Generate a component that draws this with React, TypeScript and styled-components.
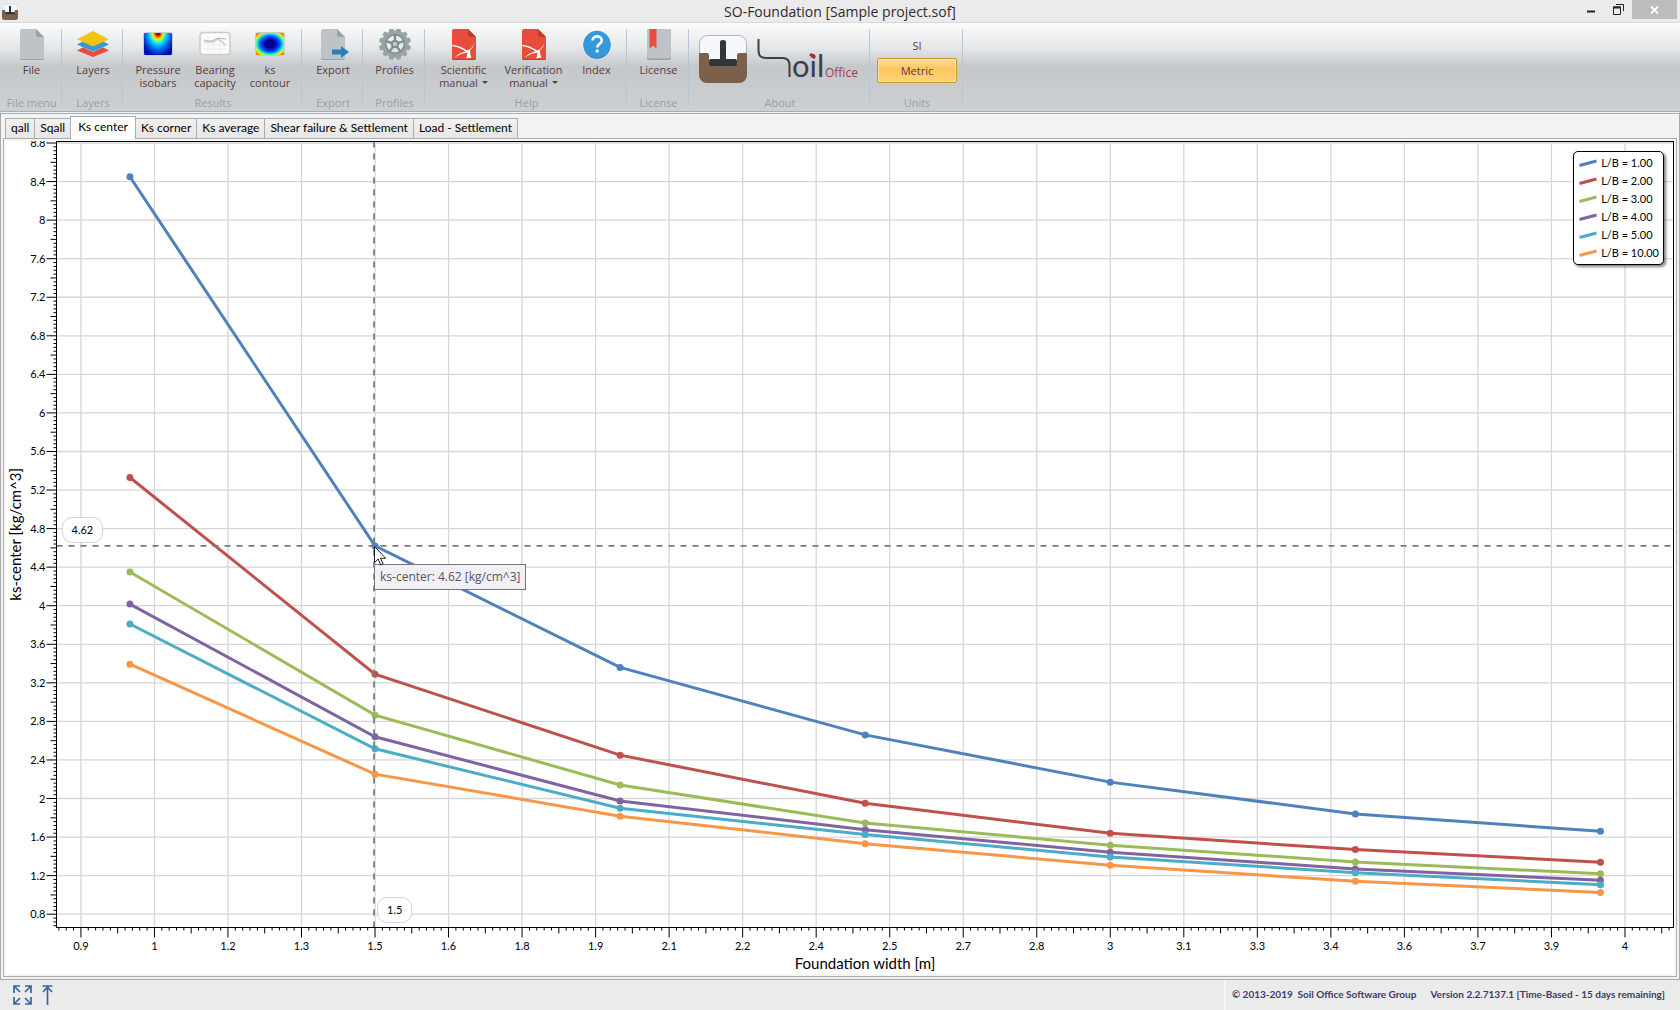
import React, { useLayoutEffect, useRef, useState } from "react";
import styled, { createGlobalStyle } from "styled-components";

const uiFont = `"Open Sans", "Noto Sans", sans-serif`;
const chartFont = `Lato, "Open Sans", sans-serif`;

const GlobalStyle = createGlobalStyle`
  *, *::before, *::after { box-sizing: border-box; }
  html, body, #root { height: 100%; margin: 0; }
  body { background: #ebebeb; font-family: ${uiFont}; overflow: hidden; }
  button { font: inherit; border: 0; margin: 0; padding: 0; background: none; color: inherit; }
`;

const Window = styled.div`
  display: flex;
  flex-direction: column;
  height: 100vh;
`;

/* ---------- title bar ---------- */

const TitleBar = styled.header`
  display: grid;
  grid-template-columns: 1fr auto 1fr;
  height: 23px;
  background: #ebebeb;
  border-bottom: 1px solid #d7d9db;
`;

const AppIcon = styled.div`
  padding: 3px 2px;
`;

const Title = styled.h1`
  margin: 0;
  font-size: 14px;
  line-height: 23px;
  font-weight: 400;
  color: #2b2b2b;
`;

const WindowControls = styled.div`
  display: flex;
  justify-content: flex-end;
  padding-right: 3px;
`;

const WindowButton = styled.button<{ $close?: boolean }>`
  display: flex;
  align-items: center;
  justify-content: center;
  width: ${(p) => (p.$close ? 45 : 27)}px;
  height: 19px;
  background: ${(p) => (p.$close ? "#bcbcbc" : "transparent")};
`;

/* ---------- ribbon ---------- */

const Ribbon = styled.nav`
  display: flex;
  height: 88px;
  padding-top: 6px;
  background: linear-gradient(#fbfcfc 0, #e6e8e9 24px, #c4c8cb 44px, #cdd0d2 88px);
  flex: none;
`;

const Group = styled.section<{ $width: number }>`
  display: flex;
  flex-direction: column;
  align-items: center;
  justify-content: space-between;
  width: ${(p) => p.$width}px;
  padding-left: 1px;
  background: linear-gradient(#b4c6da, #b4c6da) right top / 1px 76px no-repeat;
`;

const GroupBody = styled.div`
  display: flex;
  align-items: flex-start;
  justify-content: center;
`;

const GroupName = styled.h2`
  margin: 0;
  font-size: 11px;
  line-height: 16px;
  font-weight: 400;
  color: #9b9ea1;
`;

const Tool = styled.button<{ $width: number }>`
  display: flex;
  flex-direction: column;
  align-items: center;
  width: ${(p) => p.$width}px;
  font-size: 11px;
  line-height: 13px;
  color: #5a3c40;
  svg { display: block; margin-bottom: 2px; }
`;

const Caret = styled.span`
  display: inline-block;
  margin-left: 4px;
  vertical-align: 3px;
  border: 3px solid transparent;
  border-top-color: #5a3c40;
  border-bottom: 0;
`;

const AboutRow = styled.div`
  display: flex;
  gap: 10px;
  padding-top: 6px;
`;

const Units = styled.div`
  display: flex;
  flex-direction: column;
  padding-top: 4px;
`;

const UnitButton = styled.button<{ $on?: boolean }>`
  width: 80px;
  height: 25px;
  font-size: 11px;
  line-height: 22px;
  color: #5a3c40;
  border: 1px solid ${(p) => (p.$on ? "#c29b29" : "transparent")};
  border-radius: 2px;
  background: ${(p) => (p.$on ? "linear-gradient(#fddaa0, #fec65f 45%, #fed27c)" : "none")};
  box-shadow: ${(p) => (p.$on ? "inset 0 0 0 1px #ffe0a0" : "none")};
`;

/* ---------- tabs and panel ---------- */

const Workspace = styled.main`
  flex: 1;
  min-height: 0;
  display: flex;
  flex-direction: column;
  padding: 2px;
  background: #f3f3f3;
  border: 1px solid #a9abad;
  border-top: 3px double #9fb0c2;
`;

const TabList = styled.div`
  display: flex;
  align-items: flex-end;
  padding-left: 2px;
  height: 22px;
  flex: none;
`;

const Tab = styled.button<{ $active?: boolean }>`
  position: relative;
  z-index: ${(p) => (p.$active ? 1 : 0)};
  height: ${(p) => (p.$active ? 23 : 20)}px;
  margin-bottom: ${(p) => (p.$active ? -1 : 0)}px;
  margin-right: -1px;
  padding: 0 ${(p) => (p.$active ? 7 : 5)}px ${(p) => (p.$active ? 3 : 2)}px;
  font-family: ${chartFont};
  font-size: 12px;
  line-height: 16px;
  color: #000;
  border: 1px solid #acacac;
  border-bottom: 0;
  background: ${(p) => (p.$active ? "#fff" : "linear-gradient(#f1f1f1, #e6e6e6)")};
`;

const Panel = styled.div`
  flex: 1;
  min-height: 0;
  display: flex;
  padding: 2px;
  border: 1px solid #acacac;
  background: #f6f6f6;
`;

const ChartArea = styled.div`
  position: relative;
  flex: 1;
  min-width: 0;
  background: #fff;
  overflow: hidden;
  svg { display: block; }
`;

const ChartDrawing = styled.svg`
  font-family: ${chartFont};
  font-size: 11px;
  width: 100%;
  height: 100%;
`;

const Bubble = styled.div`
  position: absolute;
  padding: 0 9px;
  height: 26px;
  font-family: ${chartFont};
  font-size: 11px;
  line-height: 24px;
  color: #000;
  border: 1px solid #d3d3d3;
  border-radius: 10px;
  background: rgba(255, 255, 255, 0.9);
`;

const Tooltip = styled.div`
  position: absolute;
  padding: 0 5px;
  height: 26px;
  font-size: 12px;
  line-height: 24px;
  white-space: nowrap;
  color: #575757;
  border: 1px solid #767676;
  background: #f0f0f6;
`;

const Pointer = styled.svg`
  position: absolute;
`;

const Legend = styled.ul`
  position: absolute;
  top: 10px;
  right: 10px;
  margin: 0;
  padding: 2px 4px 2px 5px;
  list-style: none;
  border: 1px solid #000;
  border-radius: 5px;
  background: #fff;
  box-shadow: 2px 2px 3px rgba(0, 0, 0, 0.5);
`;

const LegendItem = styled.li`
  display: flex;
  align-items: center;
  gap: 4px;
  font-family: ${chartFont};
  font-size: 11px;
  line-height: 18px;
`;

/* ---------- status bar ---------- */

const StatusBar = styled.footer`
  display: flex;
  align-items: stretch;
  justify-content: space-between;
  height: 30px;
  flex: none;
  background: #ebebeb;
`;

const StatusTools = styled.div`
  display: flex;
  align-items: center;
  gap: 10px;
  padding-left: 13px;
  button, svg { display: block; }
`;

const StatusText = styled.div`
  display: flex;
  gap: 14px;
  padding: 0 15px 0 6px;
  border-left: 2px solid #f6f6f6;
  font-family: ${chartFont};
  font-size: 10px;
  line-height: 29px;
  font-weight: 700;
  color: #3b3b68;
`;

/* ---------- icons ---------- */

const FileIcon = ({ arrow }: { arrow?: boolean }) => (
  <svg width="32" height="32" viewBox="0 0 32 32">
    <path d="M6 0h14l8 8v21a2 2 0 0 1-2 2H6a2 2 0 0 1-2-2V2a2 2 0 0 1 2-2z" fill="#bdc3c7" />
    <path d="M4 28.500v.5a2 2 0 0 0 2 2h20a2 2 0 0 0 2-2v-.5a2 2 0 0 1-2 1.500H6a2 2 0 0 1-2-1.500z" fill="#95a5a5" />
    <path d="M20 0l8 8h-6a2 2 0 0 1-2-2z" fill="#95a5a5" />
    {arrow && <path d="M15 20.500h9V17l8 6-8 6v-3.500h-9z" fill="#2980b9" />}
  </svg>
);

const LayersIcon = () => (
  <svg width="32" height="32" viewBox="0 0 32 32">
    <path d="M16 13l16 8.500L16 28 0 21.500z" fill="#e74c3c" />
    <path d="M16 8l16 7.500L16 23 0 15.500z" fill="#bfe0f3" />
    <path d="M16 7l16 8.500L16 22.500 0 15.500z" fill="#3498db" />
    <path d="M16 2l16 8.200L16 17.500 0 10.200z" fill="#f1c40f" />
  </svg>
);

const IsobarIcon = () => (
  <svg width="32" height="32" viewBox="0 0 32 32">
    <defs>
      <radialGradient id="jetDrop" gradientUnits="userSpaceOnUse" cx="0" cy="0" r="1" gradientTransform="translate(16 3) scale(17 24)">
        <stop offset="0" stopColor="#800000" />
        <stop offset=".14" stopColor="#b01000" />
        <stop offset=".22" stopColor="#ff7a00" />
        <stop offset=".3" stopColor="#ffe800" />
        <stop offset=".4" stopColor="#5dffa0" />
        <stop offset=".52" stopColor="#00d0ff" />
        <stop offset=".72" stopColor="#0070e8" />
        <stop offset="1" stopColor="#0010b0" />
      </radialGradient>
    </defs>
    <rect x="1" y="3" width="30" height="24" rx="3" fill="#cfcac3" />
    <rect x="2" y="4" width="28" height="22" rx="2" fill="#0010a8" />
    <rect x="2" y="4" width="28" height="22" rx="2" fill="url(#jetDrop)" />
  </svg>
);

const BearingIcon = () => (
  <svg width="32" height="32" viewBox="0 0 32 32" fill="none">
    <rect x="1" y="3.500" width="30" height="22" rx="3" fill="#fbfbfb" stroke="#cdc9c4" strokeWidth="1.500" />
    <path d="M5 16h22M5 20h22M9 7v16M15 7v16M21 7v16" stroke="#ededed" />
    <path d="M5 11c4 1.500 8 1.500 12-1 2-1.500 6 0 10 0" stroke="#b4b0b6" />
    <path d="M5 13h10c3-3 5-3 7-1l5 4" stroke="#cfb3b3" />
    <path d="M18 10l9 7" stroke="#b5b5b5" strokeDasharray="1 1" />
  </svg>
);

const ContourIcon = () => (
  <svg width="32" height="32" viewBox="0 0 32 32">
    <defs>
      <radialGradient id="jetRing" gradientUnits="userSpaceOnUse" cx="0" cy="0" r="1" gradientTransform="translate(16 15) scale(19.500 15.500)">
        <stop offset="0" stopColor="#000080" />
        <stop offset=".25" stopColor="#0000a0" />
        <stop offset=".5" stopColor="#0050f0" />
        <stop offset=".62" stopColor="#00c8ff" />
        <stop offset=".71" stopColor="#60ff98" />
        <stop offset=".79" stopColor="#f8f000" />
        <stop offset=".89" stopColor="#ff8a00" />
        <stop offset="1" stopColor="#c83000" />
      </radialGradient>
    </defs>
    <rect x="1" y="3" width="30" height="24" rx="3" fill="#cfcac3" />
    <rect x="2" y="4" width="28" height="22" rx="2" fill="url(#jetRing)" />
  </svg>
);

const GearIcon = () => (
  <svg width="32" height="32" viewBox="0 0 32 32">
    <g transform="translate(16 15)" fill="#95a5a5">
      {Array.from({ length: 12 }, (_, i) => (
        <path key={i} d="M-3-12.500L-1.800-16h3.600L3-12.500z" transform={`rotate(${i * 30 + 15})`} />
      ))}
      <circle r="11.200" fill="none" stroke="#95a5a5" strokeWidth="4.400" />
      <circle r="9.300" fill="none" stroke="#7f8c8d" strokeWidth="1.500" />
      {Array.from({ length: 5 }, (_, i) => (
        <path key={i} d="M0 2v8" stroke="#7f8c8d" strokeWidth="2.400" transform={`rotate(${i * 72 + 36})`} />
      ))}
      <circle r="3.200" fill="#c3c9ca" stroke="#7f8c8d" strokeWidth="2" />
    </g>
  </svg>
);

const PdfIcon = () => (
  <svg width="32" height="32" viewBox="0 0 32 32">
    <path d="M6 0h14l8 8v21a2 2 0 0 1-2 2H6a2 2 0 0 1-2-2V2a2 2 0 0 1 2-2z" fill="#e74c3c" />
    <path d="M4 28.500v.5a2 2 0 0 0 2 2h20a2 2 0 0 0 2-2v-.5a2 2 0 0 1-2 1.500H6a2 2 0 0 1-2-1.500z" fill="#c0392b" />
    <path d="M20 0l8 8h-6a2 2 0 0 1-2-2z" fill="#c0392b" />
    <path d="M4.500 16.500c5 .5 11 3.500 15 6" fill="none" stroke="#fff" strokeWidth="1.500" />
    <path d="M26 14c-1 5-5 7-9 8.500-5 1.500-8 3-10.500 6.500 3-2.500 6-4 10.500-5 1 0 2-.5 2.500-.8-.5 2.500-.5 4.500-1.200 6.300l5.200-1c-1.200-2.500-1.500-5-1.500-7.500 2.500-2 4-4 4-7z" fill="#fff" />
  </svg>
);

const HelpIcon = () => (
  <svg width="32" height="32" viewBox="0 0 32 32" fill="none">
    <circle cx="16" cy="16.200" r="13.500" fill="#2980b9" />
    <circle cx="16" cy="15.200" r="13.500" fill="#3498db" />
    <path d="M11.600 11.500c0-5.500 9.200-5.500 9.200 0 0 3.400-4.600 3.400-4.600 7" stroke="#fff" strokeWidth="2.600" />
    <circle cx="16.200" cy="22" r="1.700" fill="#fff" />
  </svg>
);

const LicenseIcon = () => (
  <svg width="32" height="32" viewBox="0 0 32 32">
    <rect x="4" y="0" width="24" height="31" rx="2" fill="#95a5a5" />
    <rect x="4" y="0" width="24" height="29.500" rx="2" fill="#bdc3c7" />
    <path d="M6.500 0h7v19.500L10 16.500l-3.500 3z" fill="#e74c3c" />
  </svg>
);

const FoundationIcon = ({ size }: { size: number }) => (
  <svg width={size} height={size} viewBox="0 0 48 48">
    <rect x=".5" y=".5" width="47" height="47" rx="8" fill="#f7f8fb" stroke="#b0b3b7" />
    <path d="M0 18h8q2 0 2 2v5h28v-5q0-2 2-2h8v22a8 8 0 0 1-8 8H8a8 8 0 0 1-8-8z" fill="#7d604b" />
    <path d="M21 7q0-2 3-2t3 2v17h9q2 0 2 2v3q0 2-2 2H12q-2 0-2-2v-3q0-2 2-2h9z" fill="#2f363c" />
  </svg>
);

const SoilLogo = () => (
  <svg width="104" height="54" viewBox="0 0 104 54" fill="none">
    <path d="M1.500 4v10c0 7 2 9 8 9h16c5 0 7 2 7 7v12" stroke="#3b4046" strokeWidth="2" />
    <text x="35" y="42" fontFamily="Lato" fontWeight="400" fontSize="31" fill="#3b4046">oil</text>
    <path d="M53 19l5 4" stroke="#a3313c" strokeWidth="3" />
    <text x="68" y="42" fontFamily="Open Sans" fontSize="12" fill="#9c3f4b">Office</text>
  </svg>
);

const FullscreenIcon = () => (
  <svg width="19" height="20" viewBox="0 0 19 20" fill="none" stroke="#3d6496" strokeWidth="1.700">
    <path d="M1 8V1h6M1.500 1.500L7 7M12 1h6v7M17.500 1.500L12 7M1 12v7h6M1.500 18.500L7 13M12 19h6v-7M17.500 18.500L12 13" />
  </svg>
);

const TopIcon = () => (
  <svg width="11" height="20" viewBox="0 0 11 20" fill="none" stroke="#3d6496" strokeWidth="1.700">
    <path d="M.5 1h10M5.500 2v18M1 7l4.500-5L10 7" />
  </svg>
);

/* ---------- chart ---------- */

const series = [
  { name: "L/B = 1.00", color: "#4f81bd", values: [8.45, 4.62, 3.36, 2.66, 2.17, 1.84, 1.66] },
  { name: "L/B = 2.00", color: "#c0504d", values: [5.33, 3.29, 2.45, 1.95, 1.64, 1.47, 1.34] },
  { name: "L/B = 3.00", color: "#9bbb59", values: [4.35, 2.865, 2.14, 1.745, 1.516, 1.342, 1.22] },
  { name: "L/B = 4.00", color: "#8064a2", values: [4.017, 2.64, 1.975, 1.677, 1.443, 1.27, 1.153] },
  { name: "L/B = 5.00", color: "#4bacc6", values: [3.81, 2.516, 1.9, 1.626, 1.394, 1.23, 1.106] },
  { name: "L/B = 10.00", color: "#f79646", values: [3.394, 2.253, 1.817, 1.532, 1.308, 1.142, 1.026] },
];

const widths = [1, 1.5, 2, 2.5, 3, 3.5, 4];
const domain = { x0: 0.8502, x1: 4.149, y0: 0.662, y1: 8.8156 };
const margin = { left: 50, right: 0, top: 0, bottom: 46 };

const Chart = () => {
  const area = useRef<HTMLDivElement>(null);
  const [size, setSize] = useState({ w: 1600, h: 800 });

  useLayoutEffect(() => {
    const el = area.current!;
    const measure = () => setSize({ w: el.clientWidth, h: el.clientHeight });
    measure();
    const observer = new ResizeObserver(measure);
    observer.observe(el);
    return () => observer.disconnect();
  }, []);

  const left = margin.left + 0.5;
  const right = size.w - margin.right - 0.5;
  const top = margin.top + 0.5;
  const bottom = size.h - margin.bottom - 0.5;
  const px = (v: number) => left + ((v - domain.x0) / (domain.x1 - domain.x0)) * (right - left);
  const py = (v: number) => bottom - ((v - domain.y0) / (domain.y1 - domain.y0)) * (bottom - top);

  const xTicks = Array.from({ length: 222 }, (_, i) => ({ i: i - 3, v: 0.9 + (i - 3) * 0.015 })).filter((t) => t.v < domain.x1);
  const yTicks = Array.from({ length: 205 }, (_, i) => ({ i: i - 3, v: 0.8 + (i - 3) * 0.04 })).filter((t) => t.v < domain.y1);
  const length = (i: number) => (i % 10 === 0 ? 10 : i % 5 === 0 ? 6 : 3);
  const xMajor = xTicks.filter((t) => t.i % 10 === 0);
  const yMajor = yTicks.filter((t) => t.i % 10 === 0);
  const cx = px(1.498);
  const cy = py(4.62);

  return (
    <ChartArea ref={area}>
      <ChartDrawing>
        {xMajor.map((t) => <line key={t.i} x1={px(t.v)} x2={px(t.v)} y1={top} y2={bottom} stroke="#d6d6d6" strokeWidth={1.300} />)}
        {yMajor.map((t) => <line key={t.i} x1={left} x2={right} y1={py(t.v)} y2={py(t.v)} stroke="#d6d6d6" strokeWidth={1.300} />)}
        {xTicks.map((t) => <line key={t.i} x1={px(t.v)} x2={px(t.v)} y1={bottom} y2={bottom + length(t.i)} stroke="#000" />)}
        {yTicks.map((t) => <line key={t.i} x1={left} x2={left - length(t.i)} y1={py(t.v)} y2={py(t.v)} stroke="#000" />)}
        {xMajor.map((t) => (
          <text key={t.i} x={px(t.v)} y={bottom + 22} textAnchor="middle">{Math.floor(t.v * 10 + 0.001) / 10}</text>
        ))}
        {yMajor.map((t) => (
          <text key={t.i} x={left - 11} y={py(t.v) + 4} textAnchor="end">{Math.round(t.v * 10) / 10}</text>
        ))}
        {series.map((s) => (
          <g key={s.name} fill={s.color}>
            <polyline fill="none" stroke={s.color} strokeWidth={3} points={s.values.map((v, i) => `${px(widths[i])},${py(v)}`).join(" ")} />
            {s.values.map((v, i) => <circle key={i} cx={px(widths[i])} cy={py(v)} r={3.500} />)}
          </g>
        ))}
        <path d={`M${cx} ${top}V${bottom}M${left} ${cy}H${right}`} stroke="#7b7b7b" strokeWidth={1.800} strokeDasharray="6 6" />
        <rect x={left} y={top} width={right - left} height={bottom - top} fill="none" stroke="#000" />
        <text x={(left + right) / 2} y={size.h - 5} fontSize={15} textAnchor="middle">Foundation width [m]</text>
        <text transform={`translate(15 ${bottom / 2}) rotate(-90)`} fontSize={15} textAnchor="middle">ks-center [kg/cm^3]</text>
      </ChartDrawing>
      <Bubble style={{ left: left + 5, top: cy - 29 }}>4.62</Bubble>
      <Bubble style={{ left: cx + 3, top: bottom - 31 }}>1.5</Bubble>
      <Tooltip role="tooltip" style={{ left: cx, top: cy + 18 }}>ks-center: 4.62 [kg/cm^3]</Tooltip>
      <Pointer width="13" height="20" viewBox="0 0 13 20" style={{ left: cx, top: cy }}>
        <path d="M.5.5v16l3.700-3.500 2.600 6 2.300-1-2.600-5.700h5.200z" fill="#fff" stroke="#1c1c28" />
      </Pointer>
      <Legend>
        {series.map((s) => (
          <LegendItem key={s.name}>
            <svg width="18" height="8" viewBox="0 0 18 8"><path d="M.5 6.500l17-4.500" stroke={s.color} strokeWidth="3" /></svg>
            {s.name}
          </LegendItem>
        ))}
      </Legend>
    </ChartArea>
  );
};

/* ---------- page ---------- */

const tabs = ["qall", "Sqall", "Ks center", "Ks corner", "Ks average", "Shear failure & Settlement", "Load - Settlement"];

export default function App() {
  const [tab, setTab] = useState("Ks center");
  const [unit, setUnit] = useState("Metric");
  return (
    <Window>
      <GlobalStyle />
      <TitleBar>
        <AppIcon><FoundationIcon size={16} /></AppIcon>
        <Title>SO-Foundation [Sample project.sof]</Title>
        <WindowControls>
          <WindowButton aria-label="Minimize">
            <svg width="9" height="9"><path d="M0 6.500h8" stroke="#222" strokeWidth="2" /></svg>
          </WindowButton>
          <WindowButton aria-label="Restore">
            <svg width="11" height="11" fill="none" stroke="#222"><path d="M3 .5h7.500V7M.5 3v7.500h7V3z" /><path d="M0 3.500h8" strokeWidth="2" /></svg>
          </WindowButton>
          <WindowButton $close aria-label="Close">
            <svg width="9" height="8"><path d="M1 .5l7 7M8 .5l-7 7" stroke="#fff" strokeWidth="1.800" /></svg>
          </WindowButton>
        </WindowControls>
      </TitleBar>
      <Ribbon>
        <Group $width={62}>
          <GroupBody><Tool $width={56}><FileIcon />File</Tool></GroupBody>
          <GroupName>File menu</GroupName>
        </Group>
        <Group $width={61}>
          <GroupBody><Tool $width={56}><LayersIcon />Layers</Tool></GroupBody>
          <GroupName>Layers</GroupName>
        </Group>
        <Group $width={179}>
          <GroupBody>
            <Tool $width={60}><IsobarIcon />Pressure<br />isobars</Tool>
            <Tool $width={54}><BearingIcon />Bearing<br />capacity</Tool>
            <Tool $width={56}><ContourIcon />ks<br />contour</Tool>
          </GroupBody>
          <GroupName>Results</GroupName>
        </Group>
        <Group $width={61}>
          <GroupBody><Tool $width={56}><FileIcon arrow />Export</Tool></GroupBody>
          <GroupName>Export</GroupName>
        </Group>
        <Group $width={62}>
          <GroupBody><Tool $width={56}><GearIcon />Profiles</Tool></GroupBody>
          <GroupName>Profiles</GroupName>
        </Group>
        <Group $width={202}>
          <GroupBody>
            <Tool $width={68}><PdfIcon />Scientific<span>manual<Caret /></span></Tool>
            <Tool $width={72}><PdfIcon />Verification<span>manual<Caret /></span></Tool>
            <Tool $width={54}><HelpIcon />Index</Tool>
          </GroupBody>
          <GroupName>Help</GroupName>
        </Group>
        <Group $width={62}>
          <GroupBody><Tool $width={56}><LicenseIcon />License</Tool></GroupBody>
          <GroupName>License</GroupName>
        </Group>
        <Group $width={181}>
          <AboutRow><FoundationIcon size={48} /><SoilLogo /></AboutRow>
          <GroupName>About</GroupName>
        </Group>
        <Group $width={93}>
          <Units>
            {["SI", "Metric"].map((u) => (
              <UnitButton key={u} $on={u === unit} onClick={() => setUnit(u)}>{u}</UnitButton>
            ))}
          </Units>
          <GroupName>Units</GroupName>
        </Group>
      </Ribbon>
      <Workspace>
        <TabList role="tablist">
          {tabs.map((t) => (
            <Tab key={t} role="tab" aria-selected={t === tab} $active={t === tab} onClick={() => setTab(t)}>{t}</Tab>
          ))}
        </TabList>
        <Panel><Chart /></Panel>
      </Workspace>
      <StatusBar>
        <StatusTools>
          <button aria-label="Full screen"><FullscreenIcon /></button>
          <button aria-label="Collapse ribbon"><TopIcon /></button>
        </StatusTools>
        <StatusText>
          <span>© 2013-2019&nbsp; Soil Office Software Group</span>
          <span>Version 2.2.7137.1 [Time-Based - 15 days remaining]</span>
        </StatusText>
      </StatusBar>
    </Window>
  );
}
